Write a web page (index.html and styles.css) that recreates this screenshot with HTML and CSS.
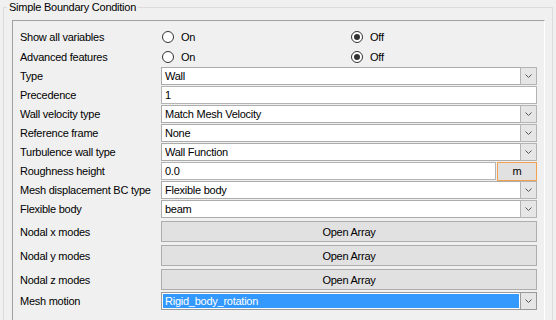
FILE: index.html
```html
<!DOCTYPE html>
<html lang="en">
<head>
    <meta charset="UTF-8">
    <title>Simple Boundary Condition</title>
    <link rel="stylesheet" href="styles.css">
</head>
<body>
    <fieldset class="group">
        <legend>Simple Boundary Condition</legend>
        <div class="panel">
            <div class="row radio-row">
                <span class="label">Show all variables</span>
                <span class="radio"><span class="dot"></span>On</span>
                <span class="radio checked"><span class="dot"></span>Off</span>
            </div>
            <div class="row radio-row">
                <span class="label">Advanced features</span>
                <span class="radio"><span class="dot"></span>On</span>
                <span class="radio checked"><span class="dot"></span>Off</span>
            </div>

            <div class="row">
                <span class="label">Type</span>
                <div class="combo"><span class="value">Wall</span><span class="drop"><svg width="7" height="4" viewBox="0 0 7 4"><polyline points="0.5,0.5 3.5,3.5 6.5,0.5"/></svg></span></div>
            </div>
            <div class="row">
                <span class="label">Precedence</span>
                <div class="textbox">1</div>
            </div>
            <div class="row">
                <span class="label">Wall velocity type</span>
                <div class="combo"><span class="value">Match Mesh Velocity</span><span class="drop"><svg width="7" height="4" viewBox="0 0 7 4"><polyline points="0.5,0.5 3.5,3.5 6.5,0.5"/></svg></span></div>
            </div>
            <div class="row">
                <span class="label">Reference frame</span>
                <div class="combo"><span class="value">None</span><span class="drop"><svg width="7" height="4" viewBox="0 0 7 4"><polyline points="0.5,0.5 3.5,3.5 6.5,0.5"/></svg></span></div>
            </div>
            <div class="row">
                <span class="label">Turbulence wall type</span>
                <div class="combo"><span class="value">Wall Function</span><span class="drop"><svg width="7" height="4" viewBox="0 0 7 4"><polyline points="0.5,0.5 3.5,3.5 6.5,0.5"/></svg></span></div>
            </div>
            <div class="row">
                <span class="label">Roughness height</span>
                <div class="unit-field">
                    <div class="textbox">0.0</div>
                    <button class="unit-btn">m</button>
                </div>
            </div>
            <div class="row">
                <span class="label">Mesh displacement BC type</span>
                <div class="combo"><span class="value">Flexible body</span><span class="drop"><svg width="7" height="4" viewBox="0 0 7 4"><polyline points="0.5,0.5 3.5,3.5 6.5,0.5"/></svg></span></div>
            </div>
            <div class="row">
                <span class="label">Flexible body</span>
                <div class="combo"><span class="value">beam</span><span class="drop"><svg width="7" height="4" viewBox="0 0 7 4"><polyline points="0.5,0.5 3.5,3.5 6.5,0.5"/></svg></span></div>
            </div>

            <div class="row btn-row">
                <span class="label">Nodal x modes</span>
                <button class="array-btn">Open Array</button>
            </div>
            <div class="row btn-row">
                <span class="label">Nodal y modes</span>
                <button class="array-btn">Open Array</button>
            </div>
            <div class="row btn-row">
                <span class="label">Nodal z modes</span>
                <button class="array-btn">Open Array</button>
            </div>

            <div class="row last-row">
                <span class="label">Mesh motion</span>
                <div class="combo focused"><span class="value selected">Rigid_body_rotation</span><span class="drop"><svg width="7" height="4" viewBox="0 0 7 4"><polyline points="0.5,0.5 3.5,3.5 6.5,0.5"/></svg></span></div>
            </div>
        </div>
    </fieldset>
</body>
</html>
```

FILE: styles.css
```css
body {
    margin: 0;
    height: 320px;
    overflow: hidden;
    background: #f0f0f0;
    font-family: "Liberation Sans", Arial, sans-serif;
    font-size: 11px;
    letter-spacing: -0.25px;
    color: #000;
}

.group {
    box-sizing: border-box;
    width: 550px;
    margin: 0 0 0 3px;
    padding: 0 7px 0 8px;
    border: 1px solid #dcdcdc;
    min-height: 340px;
}

.group legend {
    margin-left: -5px;
    padding: 0 2px;
    line-height: 15px;
}

.panel {
    display: flex;
    flex-direction: column;
    margin-top: 5px;
    height: 320px;
    padding: 6px 0 0 7px;
    border: 1px solid;
    border-color: #a0a0a0 #fff #fff #a0a0a0;
}

.row {
    display: flex;
    align-items: center;
    flex: none;
    height: 18px;
    margin-bottom: 1px;
}

.label {
    width: 141px;
    flex: none;
    white-space: nowrap;
}

.radio-row {
    height: 20px;
    margin-bottom: 0;
}

.radio {
    display: flex;
    align-items: center;
    width: 188px;
    margin-left: 1px;
}

.dot {
    box-sizing: border-box;
    width: 12px;
    height: 12px;
    margin-right: 7px;
    border: 1px solid #333;
    border-radius: 50%;
    background: #fff;
    display: flex;
    align-items: center;
    justify-content: center;
}

.radio.checked .dot::after {
    content: "";
    width: 6px;
    height: 6px;
    border-radius: 50%;
    background: #333;
}

.combo, .textbox {
    box-sizing: border-box;
    width: 376px;
    height: 18px;
    display: flex;
    align-items: center;
    background: #fff;
}

.combo {
    border: 1px solid #acacac;
}

.textbox {
    border: 1px solid #b4b4b4;
    padding-left: 3px;
}

.combo .value {
    flex: 1;
    align-self: stretch;
    display: flex;
    align-items: center;
    padding-left: 3px;
}

.combo .value.selected {
    margin: 1px;
    padding-left: 2px;
    background: #3399ff;
    color: #fff;
}

.drop {
    box-sizing: border-box;
    width: 17px;
    align-self: stretch;
    display: flex;
    align-items: center;
    justify-content: center;
    background: #e6e6e6;
    border: 1px solid #b4b4b4;
    margin: -1px -1px -1px 0;
}

.drop svg polyline {
    fill: none;
    stroke: #555;
    stroke-width: 1;
}

.combo.focused {
    border-color: #9a9a9a;
}

.combo.focused .drop {
    border-color: #9a9a9a;
}

.unit-field {
    display: flex;
    width: 376px;
    gap: 1px;
}

.unit-field .textbox {
    width: 335px;
}

.unit-btn, .array-btn {
    font: inherit;
    letter-spacing: inherit;
    color: #000;
    background: #e1e1e1;
    border: 1px solid #adadad;
    padding: 0;
    margin: 0;
}

.unit-btn {
    box-sizing: border-box;
    width: 40px;
    height: 19px;
    border-color: #f2a24e;
}

.btn-row {
    height: 21px;
    margin-top: 2px;
    margin-bottom: 1px;
}

.array-btn {
    box-sizing: border-box;
    width: 376px;
    height: 21px;
}

.last-row {
    margin-top: 1px;
}
```
